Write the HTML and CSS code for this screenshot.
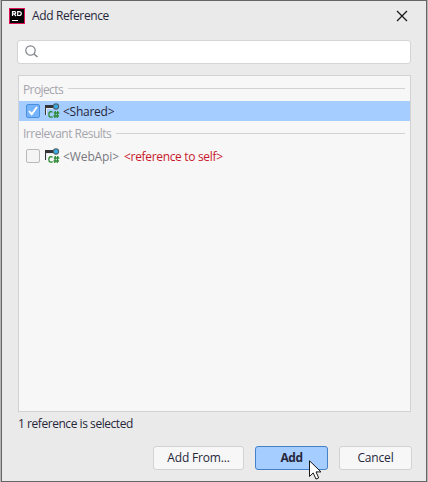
FILE: index.html
```html
<!DOCTYPE html>
<html lang="en">
<head>
<meta charset="utf-8">
<title>Add Reference</title>
<link rel="stylesheet" href="styles.css">
</head>
<body>
<svg width="0" height="0" class="defs">
  <symbol id="project" viewBox="0 0 16 16">
    <path d="M3 5h6v1H3v6H2V5z" fill="#e8ebed"/>
    <path d="M1 2h8v3H2v7H1z" fill="#333538"/>
    <circle cx="12" cy="3.500" r="2.600" fill="#35aee8" stroke="#4e6370" stroke-width="1.100"/>
    <path d="M8.500 9.300C7.700 8.300 4.800 8.100 4.800 11.400S7.700 14.500 8.500 13.500M11.300 8l-.5 7M13.700 8l-.5 7M9.800 10h5.500M9.500 13h5.500" fill="none" stroke="#2f8a37" stroke-width="1.350"/>
  </symbol>
</svg>
<main class="dialog">
  <header class="titlebar">
    <svg class="logo" width="16" height="16" viewBox="0 0 16 16">
      <path d="M0 0h16v16H0z" fill="#dc1156"/><path d="M1 1h14v14H1z" fill="#050505"/>
      <path d="M3.500 8V3.600h2.200q1 0 1 1.100t-1 1.200H3.500M5.300 6L7 8M8.700 3.600v3.900h1.300q2.300 0 2.300-1.950T10 3.600zM3 12.500h6" fill="none" stroke="#fff" stroke-width="1.200"/>
    </svg>
    <h1 class="title">Add Reference</h1>
    <svg class="close" width="12" height="12" viewBox="0 0 12 12"><path d="M1 1l10 10M11 1L1 11" stroke="#151515" stroke-width="1.200"/></svg>
  </header>
  <div class="search">
    <svg width="14" height="14" viewBox="0 0 14 14"><circle cx="5.500" cy="5.500" r="4.700" fill="none" stroke="#7f838a" stroke-width="1.200"/><path d="M9 9l3.500 3" stroke="#7f838a" stroke-width="1.500"/></svg>
  </div>
  <section class="list">
    <div class="group"><span class="t-projects">Projects</span></div>
    <div class="row selected">
      <span class="check checked"><svg width="14" height="14" viewBox="0 0 14 14"><path d="M3 7l2.700 3.200L11 3" fill="none" stroke="#fff" stroke-width="1.900"/></svg></span>
      <svg class="icon" width="16" height="16"><use href="#project"/></svg>
      <span class="name">&lt;Shared&gt;</span>
    </div>
    <div class="group second"><span class="t-irrelevant">Irrelevant Results</span></div>
    <div class="row second-row">
      <span class="check"></span>
      <svg class="icon" width="16" height="16"><use href="#project"/></svg>
      <span class="name muted">&lt;WebApi&gt;</span>
      <span class="name error">&lt;reference to self&gt;</span>
    </div>
  </section>
  <p class="status">1 reference is selected</p>
  <footer class="actions">
    <button class="btn wide">Add From...</button>
    <button class="btn primary">Add</button>
    <button class="btn">Cancel</button>
  </footer>
</main>
<svg class="cursor" width="14" height="21" viewBox="0 0 14 21"><path d="M.5.8v15.700l3.700-3.600 2.800 6.200 2.700-1.200-2.700-6h5z" fill="#fff" stroke="#171717"/></svg>
</body>
</html>
```
FILE: styles.css
```css
* { box-sizing: border-box; }
body { margin: 0; width: 428px; height: 482px; background: #b6b6b6; overflow: hidden; font: 12px/16px "Open Sans", "Noto Sans", sans-serif; color: #27273b; }
.defs { position: absolute; }
.dialog { display: flex; flex-direction: column; width: 426px; height: 482px; margin-left: 1px; background: #eaeaea; border: 1px solid #666; padding: 0 15px 0 16px; }
.titlebar { display: flex; align-items: center; height: 29px; margin: 0 1px 0 -9px; }
.title { margin: 0 auto 0 7px; font-size: 12px; font-weight: 400; white-space: nowrap; letter-spacing: -.37px; }
.close { margin-right: 2px; }
.search { display: flex; align-items: center; height: 24px; margin: 10px 0 0 -1px; padding-left: 7px; background: #fff; border: 1px solid #d4d4d4; border-radius: 3px; }
.list { height: 337px; margin-top: 11px; background: #f7f7f7; border: 1px solid #d2d2d2; }
.group { display: flex; align-items: center; gap: 5px; height: 25px; padding: 0 5px 0 4px; color: #a5a5ad; white-space: nowrap; }
.group span { padding-top: 2px; }
.group::after { content: ""; flex: 1; height: 1px; background: #d2d2d2; }
.t-projects { letter-spacing: -.6px; }
.t-irrelevant { letter-spacing: -.5px; }
.second { height: 24px; }
.row { display: flex; align-items: center; height: 20px; padding-left: 7px; white-space: nowrap; }
.second-row { height: 22px; }
.selected { background: #a6cdff; }
.check { width: 14px; height: 14px; margin-right: 4px; border: 1px solid #b9b9b9; border-radius: 2px; background: #f4f4f4; }
.checked { background: #75b3fa; border-color: #4a90de; }
.checked svg { display: block; margin: -1px; }
.icon { margin-right: 3px; }
.name { letter-spacing: -.25px; padding-top: 2px; }
.muted { color: #777780; margin-right: 5px; letter-spacing: -.1px; }
.error { color: #c9182b; letter-spacing: -.33px; }
.status { margin: 4px 0 0; letter-spacing: -.45px; }
.actions { display: flex; justify-content: flex-end; gap: 11px; margin: 14px -1px 0 0; }
.btn { width: 73px; height: 24px; padding: 0; font: inherit; color: inherit; letter-spacing: -.18px; background: #f7f7f7; border: 1px solid #d2d2d2; border-radius: 3px; white-space: nowrap; }
.wide { width: 91px; }
.primary { background: #a6cdff; border-color: #4381cd; font-weight: 700; letter-spacing: -.5px; }
.cursor { position: absolute; left: 309px; top: 460px; }
```
